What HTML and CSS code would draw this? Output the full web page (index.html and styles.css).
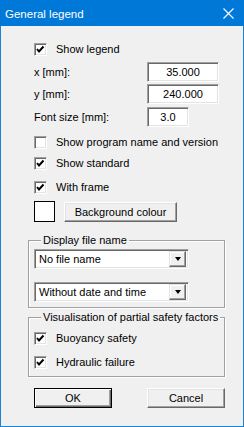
FILE: index.html
```html
<!DOCTYPE html>
<html lang="en">
<head>
    <meta charset="UTF-8">
    <title>General legend</title>
    <link rel="stylesheet" href="styles.css">
</head>
<body>
    <div class="window">
        <div class="titlebar">
            <span class="title">General legend</span>
            <svg class="close" width="11" height="11" viewBox="0 0 11 11">
                <path d="M0.5 0.5 L10.5 10.5 M10.5 0.5 L0.5 10.5" stroke="#fff" stroke-width="1.1" fill="none"/>
            </svg>
        </div>

        <div class="content">
            <div class="check first">
                <span class="box on"><svg width="9" height="9" viewBox="0 0 9 9"><path d="M1 4 L3 6.5 L7.5 1.5" stroke="#000" stroke-width="2" fill="none"/></svg></span>
                <span>Show legend</span>
            </div>

            <div class="field r1">
                <label>x [mm]:</label>
                <div class="edit wide">35.000</div>
            </div>
            <div class="field r2">
                <label>y [mm]:</label>
                <div class="edit wide">240.000</div>
            </div>
            <div class="field r3">
                <label>Font size [mm]:</label>
                <div class="edit narrow">3.0</div>
            </div>

            <div class="check c1">
                <span class="box"></span>
                <span>Show program name and version</span>
            </div>
            <div class="check c2">
                <span class="box on"><svg width="9" height="9" viewBox="0 0 9 9"><path d="M1 4 L3 6.5 L7.5 1.5" stroke="#000" stroke-width="2" fill="none"/></svg></span>
                <span>Show standard</span>
            </div>
            <div class="check c3">
                <span class="box on"><svg width="9" height="9" viewBox="0 0 9 9"><path d="M1 4 L3 6.5 L7.5 1.5" stroke="#000" stroke-width="2" fill="none"/></svg></span>
                <span>With frame</span>
            </div>

            <div class="colour-row">
                <span class="swatch"></span>
                <div class="btn bg">Background colour</div>
            </div>

            <fieldset class="group g1">
                <legend>Display file name</legend>
                <div class="combo first-combo">
                    <span class="value">No file name</span>
                    <span class="drop"><span class="arrow"></span></span>
                </div>
                <div class="combo second-combo">
                    <span class="value">Without date and time</span>
                    <span class="drop"><span class="arrow"></span></span>
                </div>
            </fieldset>

            <fieldset class="group g2">
                <legend>Visualisation of partial safety factors</legend>
                <div class="check b1">
                    <span class="box on"><svg width="9" height="9" viewBox="0 0 9 9"><path d="M1 4 L3 6.5 L7.5 1.5" stroke="#000" stroke-width="2" fill="none"/></svg></span>
                    <span>Buoyancy safety</span>
                </div>
                <div class="check b2">
                    <span class="box on"><svg width="9" height="9" viewBox="0 0 9 9"><path d="M1 4 L3 6.5 L7.5 1.5" stroke="#000" stroke-width="2" fill="none"/></svg></span>
                    <span>Hydraulic failure</span>
                </div>
            </fieldset>

            <div class="buttons">
                <div class="btn default">OK</div>
                <div class="btn">Cancel</div>
            </div>
        </div>
    </div>
</body>
</html>
```

FILE: styles.css
```css
body {
    margin: 0;
    padding: 0;
    background-color: #f0f0f0;
}
.window {
    width: 244px;
    height: 427px;
    box-sizing: border-box;
    border: 1px solid #1883d7;
    border-top: 0;
    background-color: #f0f0f0;
    font-family: "Liberation Sans", Arial, sans-serif;
    font-size: 11px;
    color: #000;
}
.titlebar {
    height: 26px;
    margin: 0 -1px;
    background-color: #0078d7;
    display: flex;
    align-items: center;
    justify-content: space-between;
    padding: 0 10px 0 5px;
}
.title {
    color: #fff;
    font-size: 11.5px;
    margin-top: 1px;
}
.close {
    display: block;
    margin-top: 0px;
}
.content {
    padding-left: 33px;
}
.check {
    display: flex;
    align-items: center;
    height: 13px;
    line-height: 13px;
}
.box {
    width: 13px;
    height: 13px;
    box-sizing: border-box;
    border: 1px solid;
    border-color: #a0a0a0 #fff #fff #a0a0a0;
    box-shadow: inset 1px 1px #696969, inset -1px -1px #e3e3e3;
    background-color: #fff;
    margin-right: 9px;
    display: flex;
    align-items: center;
    justify-content: center;
}
.box svg {
    display: block;
}
.first { margin-top: 17px; }
.c1 { margin-top: 9px; }
.c2 { margin-top: 8px; }
.c3 { margin-top: 11px; }
.field {
    display: flex;
    align-items: center;
    height: 20px;
}
.field label {
    width: 113px;
}
.r1 { margin-top: 6px; }
.r2 { margin-top: 2px; }
.r3 { margin-top: 3px; }
.edit {
    height: 20px;
    box-sizing: border-box;
    border: 1px solid;
    border-color: #a0a0a0 #fff #fff #a0a0a0;
    box-shadow: inset 1px 1px #696969, inset -1px -1px #e3e3e3;
    background-color: #fff;
    text-align: center;
    line-height: 18px;
}
.wide { width: 72px; }
.narrow { width: 42px; }
.colour-row {
    display: flex;
    align-items: flex-start;
    margin-top: 7px;
}
.swatch {
    width: 21px;
    height: 21px;
    box-sizing: border-box;
    border: 1px solid #000;
    background-color: #fff;
    margin-right: 9px;
}
.btn {
    height: 20px;
    box-sizing: border-box;
    border: 1px solid;
    border-color: #fff #696969 #696969 #fff;
    box-shadow: inset -1px -1px #a0a0a0, inset 1px 1px #e3e3e3;
    background-color: #f0f0f0;
    text-align: center;
    line-height: 18px;
}
.bg {
    width: 113px;
    margin-top: 1px;
}
.group {
    width: 197px;
    box-sizing: border-box;
    margin: 0 0 0 -6px;
    padding: 0 0 0 5px;
    border: 1px solid #a0a0a0;
    box-shadow: inset 1px 1px #fff, 1px 1px #fff;
    min-width: 0;
}
.group legend {
    margin-left: 7px;
    padding: 0 2px;
    height: 13px;
    line-height: 13px;
    background-color: #f0f0f0;
}
.g1 {
    margin-top: 12px;
    padding-bottom: 5px;
}
.g2 {
    margin-top: 3px;
    padding-bottom: 7px;
}
.combo {
    width: 155px;
    height: 20px;
    box-sizing: border-box;
    border: 1px solid;
    border-color: #a0a0a0 #fff #fff #a0a0a0;
    box-shadow: inset 1px 1px #696969, inset -1px -1px #e3e3e3;
    background-color: #fff;
    display: flex;
    align-items: center;
    justify-content: space-between;
    padding: 0 2px 0 4px;
}
.first-combo { margin-top: 2px; }
.second-combo { margin-top: 13px; }
.drop {
    width: 17px;
    height: 16px;
    box-sizing: border-box;
    border: 1px solid;
    border-color: #e3e3e3 #696969 #696969 #e3e3e3;
    box-shadow: inset -1px -1px #a0a0a0, inset 1px 1px #fff;
    background-color: #f0f0f0;
    display: flex;
    align-items: center;
    justify-content: center;
}
.arrow {
    width: 0;
    height: 0;
    border-left: 3.5px solid transparent;
    border-right: 3.5px solid transparent;
    border-top: 4px solid #000;
}
.b1 { margin-top: 8px; }
.b2 { margin-top: 11px; }
.buttons {
    display: flex;
    gap: 35px;
    margin-top: 11px;
}
.buttons .btn {
    width: 78px;
}
.default {
    border-color: #000;
    box-shadow: inset 1px 1px #fff, inset -1px -1px #696969, inset -2px -2px #a0a0a0;
}
```
